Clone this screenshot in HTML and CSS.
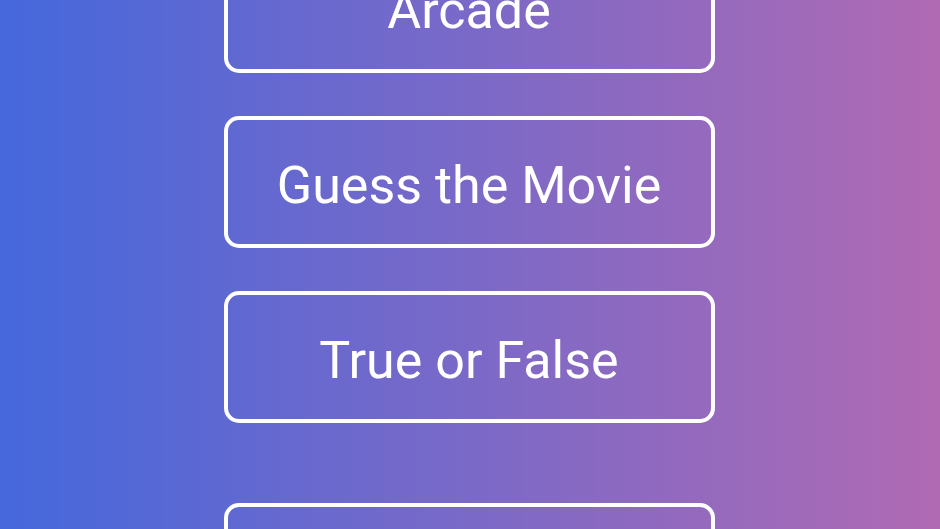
FILE: index.html
```html
<!DOCTYPE html>
<html lang="en">
<head>
<meta charset="utf-8">
<title>Game Modes</title>
<link rel="stylesheet" href="styles.css">
</head>
<body>
<main class="menu">
  <button class="mode">Arcade</button>
  <button class="mode">Guess the Movie</button>
  <button class="mode">True or False</button>
  <button class="mode mode--spaced">Settings</button>
</main>
</body>
</html>
```
FILE: styles.css
```css
html, body {
  margin: 0;
  padding: 0;
  height: 100%;
  overflow: hidden;
}

body {
  background: linear-gradient(to right, #4568dc, #b06ab3);
  font-family: Roboto, "Liberation Sans", sans-serif;
}

.menu {
  display: flex;
  flex-direction: column;
  align-items: center;
  gap: 43px;
  margin-top: -59px;
  padding-right: 2px;
}

.mode {
  box-sizing: border-box;
  width: 491px;
  height: 132px;
  padding: 8px 0 0 0;
  margin: 0;
  border: 4px solid #fff;
  border-radius: 15px;
  background: transparent;
  color: #fff;
  font-family: Roboto, "Liberation Sans", sans-serif;
  font-size: 52px;
  font-weight: 400;
  line-height: 60px;
  text-align: center;
  cursor: pointer;
}

.mode--spaced {
  margin-top: 37px;
}
```
